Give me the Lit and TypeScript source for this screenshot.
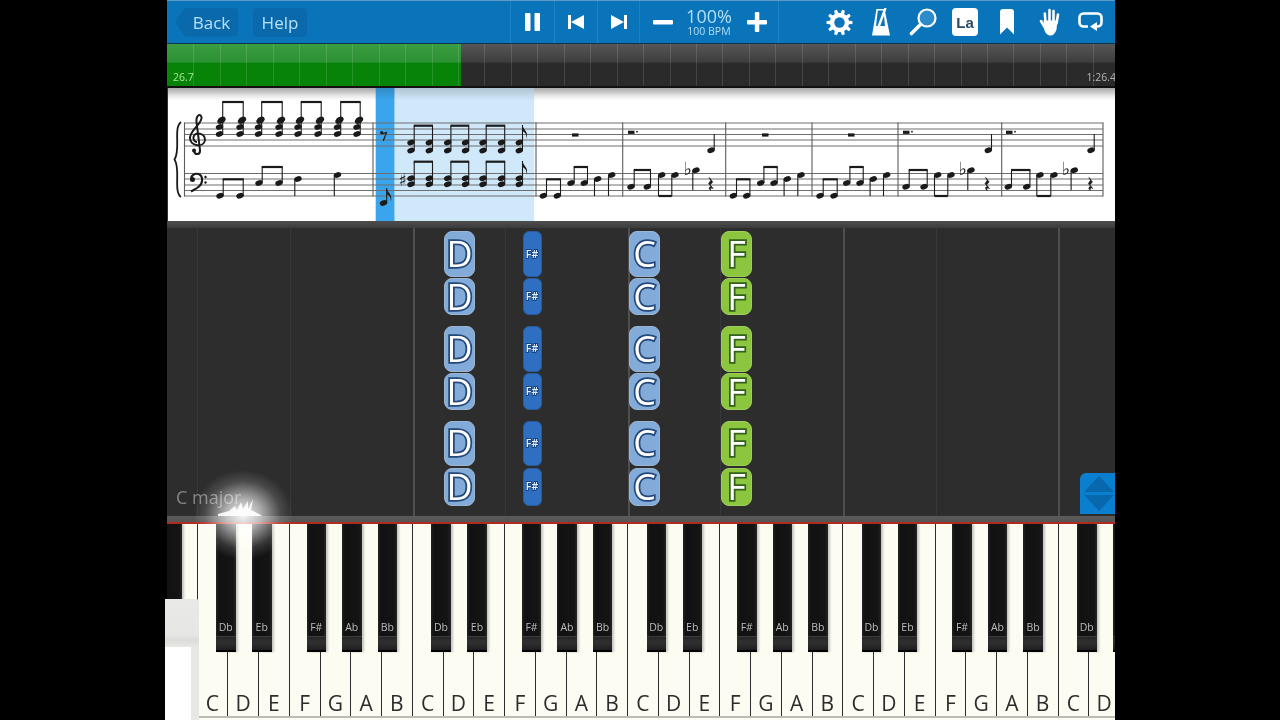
import { LitElement, html, css, svg } from "lit";
import { customElement } from "lit/decorators.js";

const INK = "#1a1a1a";
const head = (x: number, y: number) =>
  svg`<ellipse cx=${x} cy=${y} rx="3.8" ry="2.7" transform="rotate(-20 ${x} ${y})" fill=${INK}></ellipse>`;
const line = (x1: number, y1: number, x2: number, y2: number, w = 1.1) =>
  svg`<line x1=${x1} y1=${y1} x2=${x2} y2=${y2} stroke=${INK} stroke-width=${w}></line>`;
const upNote = (x: number, y: number, top: number) => [head(x, y), line(x + 3.2, y, x + 3.2, top)];
const downNote = (x: number, y: number, bottom: number) => [head(x, y), line(x - 3.2, y, x - 3.2, bottom)];
const beam = (x1: number, x2: number, y: number) => line(x1 + 2.7, y, x2 + 3.7, y, 2.2);
const flag = (x: number, y: number) =>
  svg`<path d="M${x} ${y}c.6 5 6.5 6.5 4 14c.6-5-2-7-4-8z" fill=${INK}></path>`;
const wideRest = (x: number, y: number, dot = false) => [
  svg`<rect x=${x - 3} y=${y - 1.6} width="6.5" height="3.2" fill=${INK}></rect>`,
  dot ? svg`<circle cx=${x + 6} cy=${y - 0.6} r="0.9" fill=${INK}></circle>` : null,
];
const quarterRest = (x: number, y: number) =>
  svg`<path d="M${x - 1} ${y - 7}l3.4 4.4-2.6 3 3 3.6c-2-1-3.4-.4-2.4 2c-2.4-2-1.8-4 .6-3.6l-2.6-3.4 2-3z" fill=${INK} stroke=${INK} stroke-width=".7"></path>`;
const accidental = (x: number, y: number, c: string, size: number) =>
  svg`<text x=${x} y=${y} font-family="DejaVu Sans" font-size=${size} text-anchor="middle" fill=${INK}>${c}</text>`;

const chord = (x: number) => [
  head(x + 2.5, 119.5), head(x + 1.5, 121),
  head(x, 127), head(x, 134),
  line(x + 3.2, 134, x + 3.2, 102),
];
const chordBeamPair = (a: number, b: number) => [chord(a), chord(b), beam(a, b, 102)];
const dyadPair = (a: number, b: number, y1: number, y2: number, by: number) => [
  head(a, y1), head(a, y2), head(b, y1), head(b, y2),
  line(a + 3.2, y2, a + 3.2, by), line(b + 3.2, y2, b + 3.2, by), beam(a, b, by),
];
const dyadFlag = (x: number, y1: number, y2: number, top: number) => [
  head(x, y1), head(x, y2), line(x + 3.2, y2, x + 3.2, top), flag(x + 3.2, top),
];
const figureA = (x: number[]) => [
  upNote(x[0], 195.7, 179.3), upNote(x[1], 195.7, 179.3), beam(x[0], x[1], 179.3),
  upNote(x[2], 183, 167), upNote(x[3], 183, 167), beam(x[2], x[3], 167),
  downNote(x[4], 179, 196), downNote(x[5], 175, 196),
];
const figureB = (x: number[]) => [
  upNote(x[0], 186.7, 170), upNote(x[1], 186.7, 170), beam(x[0], x[1], 170),
  downNote(x[2], 175, 196), downNote(x[3], 175, 196),
  line(x[2] - 3.2, 196, x[3] - 3.2, 196, 2.2),
  accidental(x[4], 175, "♭", 18),
  downNote(x[5], 170.3, 190),
  quarterRest(x[6], 184.5),
];
const quarterUp = (x: number) => upNote(x, 150.3, 134);

const STAFF_TOP = [123, 129, 134.5, 140, 146];
const STAFF_BOTTOM = [173.5, 179, 185, 190.5, 196];
const BARS = [184.5, 373, 536, 622.7, 725.7, 812, 898, 1001.7, 1103];

const scoreArt = () => svg`
  <rect x="375.7" y="88" width="19" height="133" fill="#3aa5ec"></rect>
  <rect x="394.7" y="88" width="139.5" height="133" fill="#cfe8fa"></rect>
  ${[...STAFF_TOP, ...STAFF_BOTTOM].map(
    (y) => svg`<line x1="184" y1=${y} x2="1103" y2=${y} stroke="#6f6f6f" stroke-width="1"></line>`
  )}
  ${BARS.map((x) => svg`<line x1=${x} y1="122.6" x2=${x} y2="196.4" stroke="#5c5c5c" stroke-width="1.1"></line>`)}
  <path d="M181 122C173 128 181 150 174.5 159.500C181 169 173 191 181 197" fill="none" stroke=${INK} stroke-width="1.800"></path>
  <path d="M194 151C195 155.500 200.500 155 200 150L196.500 122C196 115.500 200 113 201.500 117C203 123 190 130 190 138C190 146.500 204 148 205 140C205 133 195 131 193.500 137C193 140 195 142 197 142" fill="none" stroke=${INK} stroke-width="2"></path>
  <circle cx="194" cy="150.500" r="2" fill=${INK}></circle>
  <path d="M191.500 180C190 175.500 195 173 198.500 174C203.500 176 203 183 199 186.500C196.500 188.700 193.500 190 191 191.500" fill="none" stroke=${INK} stroke-width="2.100"></path>
  <circle cx="192.500" cy="179.500" r="2.500" fill=${INK}></circle>
  <circle cx="205.500" cy="177" r="1.200" fill=${INK}></circle>
  <circle cx="205.500" cy="182.500" r="1.200" fill=${INK}></circle>

  ${chordBeamPair(219.500, 240)} ${chordBeamPair(258.500, 279)} ${chordBeamPair(298, 318)} ${chordBeamPair(337.500, 357)}
  ${upNote(220, 195.700, 179.300)} ${upNote(240, 195.700, 179.300)} ${beam(220, 240, 179.300)}
  ${upNote(259, 183, 167)} ${upNote(279, 183, 167)} ${beam(259, 279, 167)}
  ${downNote(298, 179, 196)} ${downNote(337.500, 175, 196)}

  <circle cx="381.700" cy="132.700" r="1.600" fill=${INK}></circle>
  <path d="M381.500 134L386.500 132.500L383.200 141" fill="none" stroke=${INK} stroke-width="1.200"></path>
  ${upNote(383.500, 203, 188)} ${flag(386.700, 188)}
  ${dyadPair(411, 429.300, 142.500, 150.500, 125.700)} ${dyadPair(447.700, 465.500, 142.500, 150.500, 125.700)} ${dyadPair(483, 501.500, 142.500, 150.500, 125.700)}
  ${dyadFlag(519.300, 142.500, 150.500, 125)}
  ${accidental(402.700, 185.500, "♯", 17)}
  ${dyadPair(411, 429.300, 178.300, 184.300, 161.700)} ${dyadPair(447.700, 465.500, 178.300, 184.300, 161.700)} ${dyadPair(483, 501.500, 178.300, 184.300, 161.700)}
  ${dyadFlag(519.300, 178.300, 184.300, 161)}

  ${wideRest(575, 135)} ${figureA([543.300, 557.300, 571, 584.300, 597.700, 611.700])}
  ${wideRest(631, 132.300, true)} ${quarterUp(711)} ${figureB([631, 647.300, 661.700, 675, 687.700, 696, 710.300])}
  ${wideRest(765, 135)} ${figureA([733.300, 746.700, 760.700, 774, 787.300, 801])}
  ${wideRest(851, 135)} ${figureA([820, 834, 846.700, 860, 873.300, 886.700])}
  ${wideRest(906, 132.300, true)} ${quarterUp(988.300)} ${figureB([906, 924, 937.700, 951, 962.700, 971, 986.700])}
  ${wideRest(1009, 132.300, true)} ${quarterUp(1091)} ${figureB([1008.300, 1026.700, 1040, 1054, 1066, 1074.300, 1090])}
`;

const gearPath = (() => {
  const cx = 13.5, cy = 13.5, teeth = 10, ro = 13, ri = 9.6;
  let d = "";
  for (let i = 0; i < teeth; i++) {
    const a = (i / teeth) * Math.PI * 2;
    const st = Math.PI / teeth;
    const pts: [number, number][] = [
      [ri, a - st * 0.62], [ro, a - st * 0.36], [ro, a + st * 0.36], [ri, a + st * 0.62],
    ];
    for (const [r, t] of pts) {
      d += `${d ? "L" : "M"}${(cx + r * Math.cos(t)).toFixed(2)} ${(cy + r * Math.sin(t)).toFixed(2)}`;
    }
  }
  return d + "Z";
})();

const ROWS: [number, number][] = [[3, 46], [50, 37], [97.5, 46], [145, 37], [192.5, 45], [239.5, 38]];
const COLUMNS = [
  { x: 277, w: 31, label: "D", cls: "pale" },
  { x: 355.5, w: 19, label: "F#", cls: "sharp" },
  { x: 462, w: 31, label: "C", cls: "pale" },
  { x: 554, w: 31, label: "F", cls: "green" },
];
const GRID = [
  { x: 30, strong: false }, { x: 123, strong: false }, { x: 245.5, strong: true }, { x: 338, strong: false },
  { x: 461, strong: true }, { x: 553, strong: false }, { x: 676, strong: true }, { x: 769, strong: false }, { x: 891, strong: true },
];
const TICKS: number[] = [];
for (let i = 1; i < 36; i++) TICKS.push(Math.round(i * 26.45));

const OCTAVE = 215.25;
const START = 30.5;
const NAMES = ["C", "D", "E", "F", "G", "A", "B"];
const whites: string[] = [];
for (let i = 0; i < 30; i++) whites.push(NAMES[i % 7]);
const BLACK = [
  { o: 18.5, n: "Db" }, { o: 54.5, n: "Eb" }, { o: 109, n: "F#" }, { o: 144.5, n: "Ab" }, { o: 180, n: "Bb" },
];
const blacks: { x: number; n: string }[] = [];
for (let oct = -1; oct < 5; oct++) for (const b of BLACK) {
  const x = START + oct * OCTAVE + b.o;
  if (x + 19.5 > 0 && x < 948) blacks.push({ x, n: x < 0 || x + 19.5 > 948 ? "" : b.n });
}

@customElement("app-root")
export class AppRoot extends LitElement {
  static styles = css`
    :host { display: block; position: relative; width: 1280px; height: 720px; background: #000; overflow: hidden; font-family: "Open Sans", "Liberation Sans", sans-serif; filter: blur(.45px); }
    .frame { width: 948px; height: 720px; margin-left: 167px; display: flex; flex-direction: column; overflow: hidden; position: relative; }

    .bar { height: 44px; flex: none; box-sizing: border-box; background: #0a74bb; border-top: 1px solid #5c9bc6; border-bottom: 1px solid #0a3550; display: flex; align-items: stretch; color: #b9e0f5; }
    .nav { width: 343px; flex: none; display: flex; align-items: center; padding-left: 8px; box-sizing: border-box; gap: 15px; }
    .nav-btn { height: 29px; background: #0969ab; border-radius: 4px; display: flex; align-items: center; justify-content: center; font-size: 17px; box-sizing: border-box; }
    .back { width: 63px; padding-left: 10px; clip-path: polygon(0 50%, 10px 0, 100% 0, 100% 100%, 10px 100%); }
    .help { width: 54px; }
    .cell { flex: none; display: flex; align-items: center; justify-content: center; box-sizing: border-box; border-left: 1px solid #1c82c4; }
    .pause { width: 44px; } .prev { width: 43px; } .next { width: 42px; }
    .tempo { width: 139px; display: flex; flex: none; border-left: 1px solid #1c82c4; box-sizing: border-box; align-items: center; }
    .minus { width: 45px; display: flex; justify-content: center; }
    .speed { width: 48px; text-align: center; color: #b4def5; }
    .pct { font-size: 18px; line-height: 19px; }
    .bpm { font-size: 10.500px; line-height: 11px; }
    .plus { padding-left: 14px; display: flex; }
    .tools { flex: 1; border-left: 1px solid #1c82c4; display: flex; align-items: center; padding-left: 39px; }
    .tool { width: 42px; flex: none; display: flex; justify-content: center; align-items: center; }
    .la { width: 26px; height: 28px; background: #fff; border-radius: 4px; color: #2b4a63; font-size: 15px; font-weight: 700; display: flex; align-items: center; justify-content: center; font-family: "Liberation Sans", sans-serif; }
    svg { display: block; }

    .timeline { height: 44px; flex: none; box-sizing: border-box; border-bottom: 2px solid #111; display: flex; font-size: 10.500px; position: relative; }
    .elapsed, .remaining { display: flex; align-items: flex-end; padding-bottom: 2px; box-sizing: border-box; }
    .elapsed { width: 294px; padding-left: 6px; color: #a5e59a; background: linear-gradient(#3b9c41 0, #2c9233 43%, #078307 46%, #078307 100%); }
    .remaining { flex: 1; justify-content: flex-end; color: #b5b5b5; background: linear-gradient(#565656 0, #3d3d3d 43%, #2a2a2a 46%, #2a2a2a 100%); }
    .remaining span { margin-right: -1px; }
    .tick { position: absolute; top: 0; bottom: 0; width: 1px; background: rgba(255,255,255,.13); }

    .score { height: 133px; flex: none; position: relative; background: linear-gradient(#c9c9c9 0, #f6f6f6 8px, #fff 14px); border-left: 1px solid #333; box-sizing: border-box; }
    .score svg { margin-left: -1px; }
    .shade { position: absolute; left: 0; right: 0; top: 0; height: 12px; background: linear-gradient(rgba(0,0,0,.16), rgba(0,0,0,0)); }
    .sep { height: 7px; flex: none; background: linear-gradient(#4e4e4e, #3b3b3b); }

    .falling { height: 288px; flex: none; position: relative; background: #2d2d2d; overflow: hidden; }
    .grid { position: absolute; top: 0; bottom: 0; width: 1px; background: #383838; }
    .grid.strong { width: 2px; background: #4f4f4f; }
    .note { position: absolute; box-sizing: border-box; display: flex; align-items: center; justify-content: center; border-radius: 8px; color: #fff; paint-order: stroke fill; font-size: 36px; line-height: 1; }
    .note.pale { background: #82abd9; border: 1px solid #9cb6d2; -webkit-text-stroke: 3.500px #24497a; }
    .note.sharp { background: #2f6fc1; border: 1px solid #285b99; border-radius: 6px; font-size: 10.500px; font-weight: 600; -webkit-text-stroke: 1.800px #1a4680; color: #e6eefa; }
    .note.green { background: #8cc63e; border: 1px solid #a0cc5e; -webkit-text-stroke: 3.500px #33601a; }
    .key-name { position: absolute; left: 9px; bottom: 7px; color: #858585; font-size: 18px; line-height: 24px; }
    .stepper { position: absolute; right: 0; top: 245px; width: 35px; height: 41px; background: #0a7fd0; border-radius: 6px 0 0 0; }

    .divider { height: 8px; flex: none; background: linear-gradient(#5a5a5a 0, #555 70%, #b12a1e 75%, #b12a1e 100%); }

    .keyboard { height: 196px; flex: none; position: relative; background: #fdfcf3; display: flex; overflow: hidden; }
    .white { flex: none; box-sizing: border-box; width: 30.750px; height: 193px; border-right: 1.500px solid #2c2c2c; position: relative; display: flex; align-items: flex-end; justify-content: center; font-size: 21px; line-height: 28px; color: #2c2c2c; }
    .white.first { width: 30.500px; }
    .floor { position: absolute; left: 0; right: 0; bottom: 2px; height: 2px; background: #bcbcb6; }
    .black { position: absolute; top: 0; width: 19.500px; height: 128px; box-sizing: border-box; background: linear-gradient(90deg, #222 0, #111 15%, #141414 85%, #262626 100%); border-bottom: 2px solid #000; box-shadow: 2px 0 2px rgba(0,0,0,.22); display: flex; flex-direction: column; align-items: center; color: #bcbcbc; font-size: 10.500px; line-height: 12px; }
    .black .name { margin-top: 97px; height: 12px; }
    .black .lip { flex: 1; align-self: stretch; margin-top: 3px; background: linear-gradient(#262626, #303030 40%, #1f1f1f); border-top: 1px solid #3c3c3c; }

    .glow { position: absolute; left: 193px; top: 470px; width: 100px; height: 90px; background: radial-gradient(closest-side, rgba(255,255,255,.95) 0, rgba(255,255,255,.62) 35%, rgba(255,255,255,.14) 75%, rgba(255,255,255,0) 100%); }
    .sparks { position: absolute; left: 215px; top: 490px; }
    .corner { position: absolute; left: 165px; top: 599px; width: 34px; height: 121px; background: linear-gradient(#e9e9e7 0, #e6e6e4 30%, #dcdcda 34%, #e8e8e4 40%); border-radius: 0 3px 0 0; }
    .corner div { width: 26px; height: 73px; margin-top: 48px; background: #fff; }
  `;

  render() {
    return html`
      <div class="frame">
        <div class="bar">
          <div class="nav">
            <div class="nav-btn back">Back</div>
            <div class="nav-btn help">Help</div>
          </div>
          <div class="cell pause">
            <svg width="15" height="18" viewBox="0 0 15 18"><rect width="5.500" height="18" rx="1" fill="#fff"></rect><rect x="9.500" width="5.500" height="18" rx="1" fill="#fff"></rect></svg>
          </div>
          <div class="cell prev">
            <svg width="16" height="14" viewBox="0 0 16 14"><rect width="3" height="14" fill="#fff"></rect><path d="M3 7L16 0V14Z" fill="#fff"></path></svg>
          </div>
          <div class="cell next">
            <svg width="16" height="14" viewBox="0 0 16 14"><rect x="13" width="3" height="14" fill="#fff"></rect><path d="M13 7L0 0V14Z" fill="#fff"></path></svg>
          </div>
          <div class="tempo">
            <div class="minus"><svg width="20" height="20" viewBox="0 0 20 20"><rect y="8" width="20" height="4.500" fill="#fff" rx="1"></rect></svg></div>
            <div class="speed"><div class="pct">100%</div><div class="bpm">100 BPM</div></div>
            <div class="plus"><svg width="20" height="20" viewBox="0 0 20 20"><rect y="8" width="20" height="4.500" fill="#fff" rx="1"></rect><rect x="7.800" width="4.500" height="20" fill="#fff" rx="1"></rect></svg></div>
          </div>
          <div class="tools">
            <div class="tool">
              <svg width="27" height="27" viewBox="0 0 27 27"><path d=${gearPath} fill="#fff"></path><circle cx="13.500" cy="13.500" r="5.200" fill="#0a74bb"></circle></svg>
            </div>
            <div class="tool">
              <svg width="20" height="28" viewBox="0 0 20 28">
                <path d="M5.500 1H13.500L19 27.500H1Z" fill="#fff"></path>
                <path d="M6.800 2.500H12.500L14 18H5Z" fill="#0a74bb"></path>
                <path d="M14.500 0L7.500 19" stroke="#fff" stroke-width="2.400"></path>
              </svg>
            </div>
            <div class="tool">
              <svg width="28" height="28" viewBox="0 0 28 28">
                <circle cx="18" cy="10" r="8.500" fill="#2c8ccb" stroke="#fff" stroke-width="2.200"></circle>
                <path d="M11.500 16.500L2.500 25.500" stroke="#fff" stroke-width="3.600" stroke-linecap="round"></path>
              </svg>
            </div>
            <div class="tool"><div class="la">La</div></div>
            <div class="tool">
              <svg width="14" height="26" viewBox="0 0 14 26"><path d="M0 3Q0 0 3 0H11Q14 0 14 3V25.500L7 18.500L0 25.500Z" fill="#fff"></path></svg>
            </div>
            <div class="tool">
              <svg width="21" height="28" viewBox="1038.500 9.500 21 28">
                <path d="M1043 22H1057L1056 31Q1054 37 1050 37Q1046 37 1044 32Z" fill="#fff"></path>
                <g stroke="#fff" stroke-width="2.600" stroke-linecap="round">
                  <path d="M1045 24L1044.300 15"></path><path d="M1049 24V11.500"></path><path d="M1053 24V12.500"></path>
                  <path d="M1056 25L1057.500 16"></path><path d="M1045 30L1040.500 22.500"></path>
                </g>
              </svg>
            </div>
            <div class="tool">
              <svg width="26" height="20" viewBox="1078 14.500 26 20">
                <path d="M1088 29H1083.500A4 4 0 0 1 1079.500 25V20A4 4 0 0 1 1083.500 16H1097.500A4 4 0 0 1 1101.500 20V25A4 4 0 0 1 1097.500 29H1096" fill="none" stroke="#fff" stroke-width="2.600"></path>
                <path d="M1090 29L1097 24.500V33.500Z" fill="#fff"></path>
              </svg>
            </div>
          </div>
        </div>

        <div class="timeline">
          <div class="elapsed"><span>26.7</span></div>
          <div class="remaining"><span>1:26.4</span></div>
          ${TICKS.map((x) => html`<div class="tick" style="left:${x}px"></div>`)}
        </div>

        <div class="score">
          <svg width="948" height="133" viewBox="167 88 948 133">${scoreArt()}</svg>
          <div class="shade"></div>
        </div>
        <div class="sep"></div>

        <div class="falling">
          ${GRID.map((g) => html`<div class="grid ${g.strong ? "strong" : ""}" style="left:${g.x}px"></div>`)}
          ${COLUMNS.map((c) =>
            ROWS.map(
              ([t, h]) => html`<div class="note ${c.cls}" style="left:${c.x}px;top:${t}px;width:${c.w}px;height:${h}px">${c.label}</div>`
            )
          )}
          <div class="key-name">C major</div>
          <div class="stepper">
            <svg width="35" height="41" viewBox="0 0 35 41">
              <path d="M19 3L34 19H4Z" fill="#0868ad"></path>
              <path d="M19 38L34 22H4Z" fill="#0868ad"></path>
            </svg>
          </div>
        </div>
        <div class="divider"></div>

        <div class="keyboard">
          <div class="white first"></div>
          ${whites.map((n) => html`<div class="white">${n}</div>`)}
          <div class="floor"></div>
          ${blacks.map(
            (b) => html`<div class="black" style="left:${b.x}px"><span class="name">${b.n}</span><div class="lip"></div></div>`
          )}
        </div>
      </div>

      <div class="glow"></div>
      <svg class="sparks" width="60" height="30" viewBox="0 0 60 30">
        <path d="M3 24L14 21L20 16L22 20L26 12L28 19L33 11L33 19L38 9L36 20L44 24L47 26H3Z" fill="#fff" fill-opacity=".9"></path>
      </svg>
      <div class="corner"><div></div></div>
    `;
  }
}
